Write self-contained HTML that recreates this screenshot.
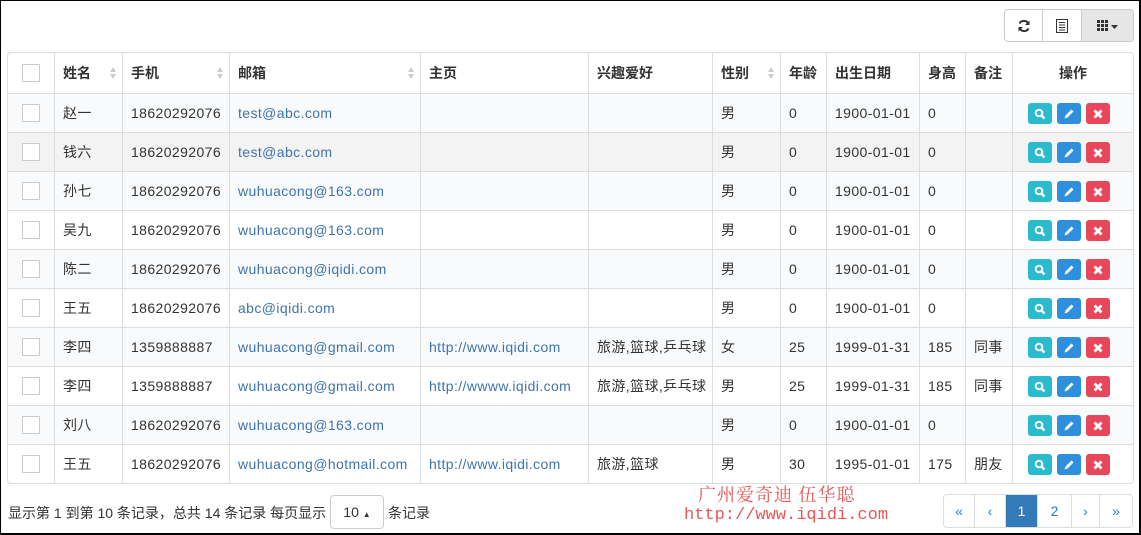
<!DOCTYPE html>
<html><head><meta charset="utf-8"><style>
*{box-sizing:border-box;margin:0;padding:0}
body{width:1141px;height:535px;overflow:hidden;background:#fff;font-family:"Liberation Sans","Noto Sans CJK SC",sans-serif;font-size:14px;color:#333;position:relative}
.frame{position:absolute;left:0;top:0;width:1141px;height:535px;border:1px solid #000;border-width:1px 2px 2px 1px}
.tb{position:absolute;top:9px;left:1004px;height:33px;display:flex;border:1px solid #ccc;border-radius:4px;overflow:hidden}
.tb div{height:31px;display:flex;align-items:center;justify-content:center;border-right:1px solid #ccc}
.tb div:last-child{border-right:0;background:#e6e6e6}
table{position:absolute;left:7px;top:52px;width:1127px;border-collapse:separate;border-spacing:0;border:1px solid #ddd;border-radius:4px;table-layout:fixed}
td,th{border-left:1px solid #ddd;border-top:1px solid #ddd;padding:0 8px;height:39px;text-align:left;white-space:nowrap;overflow:hidden}
td{letter-spacing:.4px}
th{height:40px;border-top:0;font-weight:bold;position:relative}
tr td:first-child,tr th:first-child{border-left:0}
tbody tr:nth-child(odd){background:#f9fafb}
tbody tr.h{background:#f3f3f3}
a{color:#3e74ad;text-decoration:none}
.cb{width:18px;height:18px;border:1px solid #ccc;margin:0 auto;background:#fff}
.s{position:absolute;right:5px;top:14px;width:7px;height:13px}
.s:before{content:"";position:absolute;left:0;top:0;border:3.5px solid transparent;border-bottom:5px solid #ccc;border-top:0}
.s:after{content:"";position:absolute;left:0;top:7px;border:3.5px solid transparent;border-top:5px solid #ccc;border-bottom:0}
td.ops{text-align:center;font-size:0;padding:0 12px 0 4px}
.b{display:inline-block;width:24px;height:21px;border-radius:3px;margin:0 2.5px;vertical-align:middle;position:relative}
.b svg{position:absolute;left:6px;top:5px}
.pg{position:absolute;left:943px;top:494px;height:34px;display:flex;border:1px solid #ddd;border-radius:4px;overflow:hidden}
.pg div{height:32px;display:flex;align-items:center;justify-content:center;border-right:1px solid #ddd;color:#337ab7}
.pg div:last-child{border-right:0}
.foot{position:absolute;left:8px;top:503px;font-size:14px}
.ps{position:absolute;left:330px;top:495px;width:54px;height:34px;border:1px solid #ccc;border-radius:4px;text-align:center;line-height:32px}
.wm{position:absolute;color:#e23a3a;font-family:"Liberation Serif","Noto Serif CJK SC",serif;opacity:.85}
</style></head><body>
<div class="tb">
<div style="width:38px"><svg width="14" height="14" viewBox="0 0 14 14"><path d="M11.5 5A5 5 0 0 0 2.5 4.5M2.5 9A5 5 0 0 0 11.5 9.5" stroke="#333" stroke-width="2" fill="none"/><path d="M12.5 1.5v4.5h-4.5z M1.5 12.5v-4.5h4.5z" fill="#333"/></svg></div>
<div style="width:39px"><svg width="12" height="14" viewBox="0 0 12 14"><rect x="0.5" y="0.5" width="11" height="13" fill="none" stroke="#333"/><path d="M3 3.5h6M3 6h6M3 8.5h6M3 11h6" stroke="#333"/></svg></div>
<div style="width:51px"><svg width="22" height="12" viewBox="0 0 22 12"><g fill="#333"><rect x="0" y="0" width="3" height="3"/><rect x="4" y="0" width="3" height="3"/><rect x="8" y="0" width="3" height="3"/><rect x="0" y="4" width="3" height="3"/><rect x="4" y="4" width="3" height="3"/><rect x="8" y="4" width="3" height="3"/><rect x="0" y="8" width="3" height="3"/><rect x="4" y="8" width="3" height="3"/><rect x="8" y="8" width="3" height="3"/><path d="M14 5h7l-3.5 4z"/></g></svg></div>
</div>
<table>
<colgroup><col style="width:46px"><col style="width:68px"><col style="width:107px"><col style="width:191px"><col style="width:168px"><col style="width:124px"><col style="width:68px"><col style="width:46px"><col style="width:93px"><col style="width:46px"><col style="width:47px"><col></colgroup>
<thead><tr><th><div class="cb"></div></th><th>姓名<span class="s"></span></th><th>手机<span class="s"></span></th><th>邮箱<span class="s"></span></th><th>主页</th><th>兴趣爱好</th><th>性别<span class="s"></span></th><th>年龄</th><th>出生日期</th><th>身高</th><th>备注</th><th style="text-align:center">操作</th></tr></thead>
<tbody>
<tr><td><div class="cb"></div></td><td>赵一</td><td>18620292076</td><td><a>test@abc.com</a></td><td></td><td></td><td>男</td><td>0</td><td>1900-01-01</td><td>0</td><td></td><td class="ops">OPS</td></tr>
<tr class="h"><td><div class="cb"></div></td><td>钱六</td><td>18620292076</td><td><a>test@abc.com</a></td><td></td><td></td><td>男</td><td>0</td><td>1900-01-01</td><td>0</td><td></td><td class="ops">OPS</td></tr>
<tr><td><div class="cb"></div></td><td>孙七</td><td>18620292076</td><td><a>wuhuacong@163.com</a></td><td></td><td></td><td>男</td><td>0</td><td>1900-01-01</td><td>0</td><td></td><td class="ops">OPS</td></tr>
<tr><td><div class="cb"></div></td><td>吴九</td><td>18620292076</td><td><a>wuhuacong@163.com</a></td><td></td><td></td><td>男</td><td>0</td><td>1900-01-01</td><td>0</td><td></td><td class="ops">OPS</td></tr>
<tr><td><div class="cb"></div></td><td>陈二</td><td>18620292076</td><td><a>wuhuacong@iqidi.com</a></td><td></td><td></td><td>男</td><td>0</td><td>1900-01-01</td><td>0</td><td></td><td class="ops">OPS</td></tr>
<tr><td><div class="cb"></div></td><td>王五</td><td>18620292076</td><td><a>abc@iqidi.com</a></td><td></td><td></td><td>男</td><td>0</td><td>1900-01-01</td><td>0</td><td></td><td class="ops">OPS</td></tr>
<tr><td><div class="cb"></div></td><td>李四</td><td>1359888887</td><td><a>wuhuacong@gmail.com</a></td><td><a>http://www.iqidi.com</a></td><td>旅游,篮球,乒乓球</td><td>女</td><td>25</td><td>1999-01-31</td><td>185</td><td>同事</td><td class="ops">OPS</td></tr>
<tr><td><div class="cb"></div></td><td>李四</td><td>1359888887</td><td><a>wuhuacong@gmail.com</a></td><td><a>http://wwww.iqidi.com</a></td><td>旅游,篮球,乒乓球</td><td>男</td><td>25</td><td>1999-01-31</td><td>185</td><td>同事</td><td class="ops">OPS</td></tr>
<tr><td><div class="cb"></div></td><td>刘八</td><td>18620292076</td><td><a>wuhuacong@163.com</a></td><td></td><td></td><td>男</td><td>0</td><td>1900-01-01</td><td>0</td><td></td><td class="ops">OPS</td></tr>
<tr><td><div class="cb"></div></td><td>王五</td><td>18620292076</td><td><a>wuhuacong@hotmail.com</a></td><td><a>http://www.iqidi.com</a></td><td>旅游,篮球</td><td>男</td><td>30</td><td>1995-01-01</td><td>175</td><td>朋友</td><td class="ops">OPS</td></tr>
</tbody></table>
<div class="foot">显示第 1 到第 10 条记录，总共 14 条记录 每页显示</div>
<div class="ps">10 <span style="font-size:8px">▲</span></div>
<div class="foot" style="left:388px">条记录</div>
<div class="wm" style="left:698px;top:481px;font-size:18px;letter-spacing:1px">广州爱奇迪 伍华聪</div>
<div class="wm" style="left:684px;top:506px;font-size:17px;font-family:'Liberation Mono',monospace">http://www.iqidi.com</div>
<div class="pg">
<div style="width:31px">«</div><div style="width:31px">‹</div><div style="width:32px;background:#337ab7;color:#fff">1</div><div style="width:34px">2</div><div style="width:28px">›</div><div style="width:32px">»</div>
</div>
<div class="frame"></div>
<script>
var o='<span class="b" style="background:#2bbbcf"><svg width="12" height="12" viewBox="0 0 12 12"><circle cx="5" cy="5" r="3.3" stroke="#fff" stroke-width="2" fill="none"/><path d="M7.5 7.5l3 3" stroke="#fff" stroke-width="2.4"/></svg></span><span class="b" style="background:#2e8fdc"><svg width="12" height="12" viewBox="0 0 12 12"><path d="M1.5 10.5l1-3 6-6 2 2-6 6z" fill="#fff"/></svg></span><span class="b" style="background:#e8465b"><svg width="12" height="12" viewBox="0 0 12 12"><path d="M2.5 2.5l7 7M9.5 2.5l-7 7" stroke="#fff" stroke-width="2.8"/></svg></span>';
document.querySelectorAll('td.ops').forEach(function(e){e.innerHTML=o;});
</script>
</body></html>
